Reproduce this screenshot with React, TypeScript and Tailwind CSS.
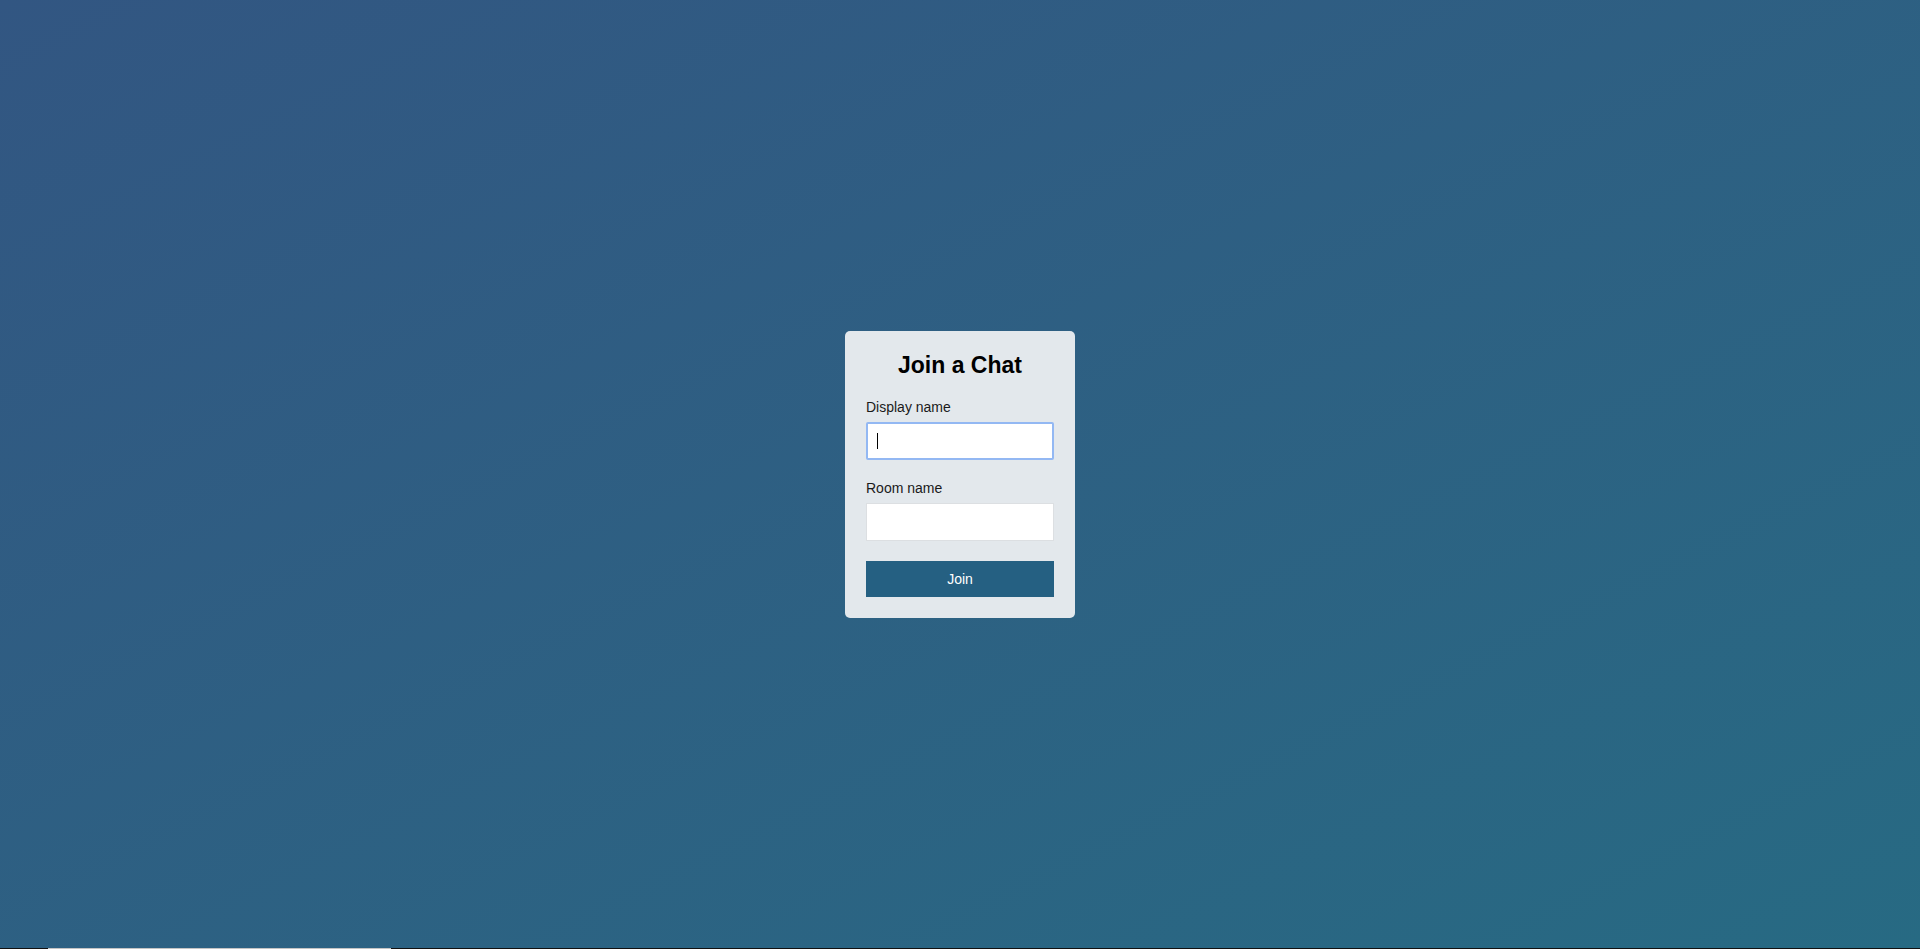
import { useState } from "react";

export default function App() {
  const [name, setName] = useState("");
  const [room, setRoom] = useState("");

  return (
    <div className="relative flex h-[949px] w-full items-center justify-center bg-gradient-to-br from-[#325682] to-[#276a83] font-['Liberation_Sans',Arial,sans-serif]">
      <form
        className="flex w-[230px] flex-col rounded-[5px] bg-[#e3e8ec] p-[21px]"
        onSubmit={(e) => e.preventDefault()}
      >
        <h2 className="text-center text-[23px] font-bold leading-[27px] text-black">
          Join a Chat
        </h2>

        <label className="mt-[20px] text-[14px] leading-[16px] text-[#1a1a1a]">
          Display name
        </label>
        <div className="relative mt-[7px]">
          <input
            autoFocus
            value={name}
            onChange={(e) => setName(e.target.value)}
            className="h-[38px] w-full rounded-[2px] border-2 border-[#93b8f3] bg-white px-[9px] text-[14px] outline-none"
          />
          {/* fake caret so the focused state shows in a still picture */}
          {!name && (
            <span className="pointer-events-none absolute left-[11px] top-[11px] h-[16px] w-px bg-black" />
          )}
        </div>

        <label className="mt-[20px] text-[14px] leading-[16px] text-[#1a1a1a]">
          Room name
        </label>
        <input
          value={room}
          onChange={(e) => setRoom(e.target.value)}
          className="mt-[7px] h-[38px] w-full border border-[#dcdfe2] bg-white px-[10px] text-[14px] outline-none"
        />

        <button
          type="submit"
          className="mt-[20px] h-[36px] w-full bg-[#256082] text-[14px] text-white"
        >
          Join
        </button>
      </form>

      <div className="absolute bottom-0 left-0 flex h-px w-full bg-[#111]">
        <div className="ml-[48px] w-[343px] bg-[#c4c4c4]" />
      </div>
    </div>
  );
}
